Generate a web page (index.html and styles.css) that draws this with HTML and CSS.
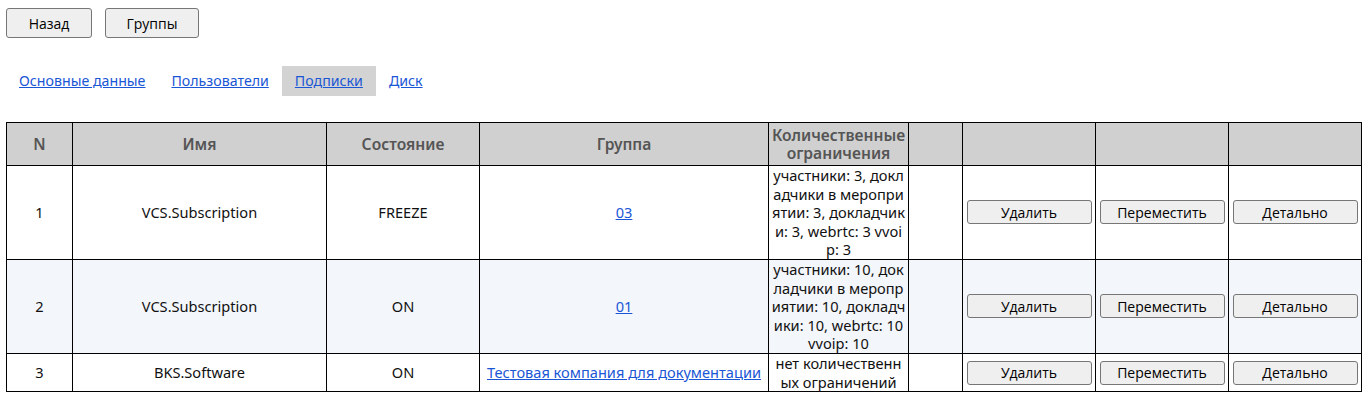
FILE: index.html
```html
<!DOCTYPE html>
<html lang="ru">
<head>
  <meta charset="UTF-8" />
  <title>Подписки</title>
  <link rel="stylesheet" href="styles.css">
</head>
<body>
  <div class="top-buttons">
    <button class="nav-btn back-btn">Назад</button>
    <button class="nav-btn groups-btn">Группы</button>
  </div>

  <div class="tabs">
    <a href="#" class="tab">Основные данные</a>
    <a href="#" class="tab">Пользователи</a>
    <a href="#" class="tab active">Подписки</a>
    <a href="#" class="tab">Диск</a>
  </div>

  <table class="subs">
    <colgroup>
      <col class="c-n"><col class="c-name"><col class="c-state"><col class="c-group">
      <col class="c-limits"><col class="c-empty"><col class="c-btn"><col class="c-btn"><col class="c-btn">
    </colgroup>
    <thead>
      <tr>
        <th>N</th><th>Имя</th><th>Состояние</th><th>Группа</th>
        <th class="limits">Количественные ограничения</th><th></th><th></th><th></th><th></th>
      </tr>
    </thead>
    <tbody>
      <tr>
        <td>1</td><td>VCS.Subscription</td><td>FREEZE</td><td><a href="#">03</a></td>
        <td class="limits">участники: 3, докладчики в мероприятии: 3, докладчики: 3, webrtc: 3 vvoip: 3</td><td></td>
        <td><button class="row-btn">Удалить</button></td>
        <td><button class="row-btn">Переместить</button></td>
        <td><button class="row-btn">Детально</button></td>
      </tr>
      <tr class="alt">
        <td>2</td><td>VCS.Subscription</td><td>ON</td><td><a href="#">01</a></td>
        <td class="limits">участники: 10, докладчики в мероприятии: 10, докладчики: 10, webrtc: 10 vvoip: 10</td><td></td>
        <td><button class="row-btn">Удалить</button></td>
        <td><button class="row-btn">Переместить</button></td>
        <td><button class="row-btn">Детально</button></td>
      </tr>
      <tr>
        <td>3</td><td>BKS.Software</td><td>ON</td><td><a href="#">Тестовая компания для документации</a></td>
        <td class="limits">нет количественных ограничений</td><td></td>
        <td><button class="row-btn">Удалить</button></td>
        <td><button class="row-btn">Переместить</button></td>
        <td><button class="row-btn">Детально</button></td>
      </tr>
    </tbody>
  </table>
</body>
</html>
```

FILE: styles.css
```css
body { margin: 8px 6px; font-family: "Noto Sans", sans-serif; font-size: 14px; color: #111; }
a { color: #1a56d6; }
.top-buttons { display: flex; gap: 13px; }
.nav-btn { height: 30px; font-family: "Open Sans", sans-serif; font-size: 14px; background: #efefef; border: 1px solid #767676; border-radius: 3px; color: #000; }
.back-btn { width: 86px; }
.groups-btn { width: 94px; }
.tabs { display: flex; margin-top: 28px; }
.tab { display: block; padding: 6px 13px 6px 13px; line-height: 18px; font-size: 14.2px; }
.tab.active { background: #d3d3d3; }
.subs { margin-top: 26px; width: 1356px; border-collapse: collapse; table-layout: fixed; border: 1px solid #000; font-size: 14.6px; }
.c-n { width: 66px; }
.c-name { width: 254px; }
.c-state { width: 153px; }
.c-group { width: 289px; }
.c-limits { width: 140px; }
.c-empty { width: 54px; }
.c-btn { width: 133px; }
.subs th, .subs td { border: 1px solid #000; text-align: center; padding: 0 2px; line-height: 18.6px; }
.subs th { background: #d0d0d0; color: #555; font-size: 15.6px; font-weight: 600; padding: 3px 0; }
.subs td.limits { word-break: break-all; padding: 0 1px; }
.subs th.limits { line-height: 18px; }
.subs tr.alt td { background: #f3f6fb; }
.row-btn { width: 125px; height: 24px; font-family: "Open Sans", sans-serif; font-size: 14px; background: #efefef; border: 1px solid #767676; border-radius: 3px; color: #000; padding: 0; }
```
